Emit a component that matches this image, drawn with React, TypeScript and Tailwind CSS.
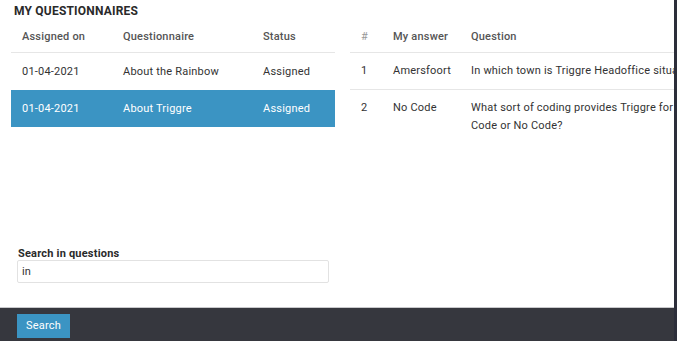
import React from 'react';

const questionnaires = [
  { date: '01-04-2021', name: 'About the Rainbow', status: 'Assigned' },
  { date: '01-04-2021', name: 'About Triggre', status: 'Assigned', selected: true },
];

const answers = [
  { nr: '1', answer: 'Amersfoort', question: 'In which town is Triggre Headoffice situated?' },
  { nr: '2', answer: 'No Code', question: 'What sort of coding provides Triggre for Low Code or No Code?' },
];

export default function App() {
  return (
    <div className="w-[677px] h-[341px] flex bg-[#2c2e3a] overflow-hidden text-[11px] text-[#333] tracking-[0.2px]" style={{ fontFamily: 'Roboto, "Noto Sans", sans-serif' }}>
      <div className="w-[674px] flex flex-col">
        <div className="h-[307px] bg-white overflow-hidden flex flex-col">
          <h1 className="pl-[14px] pt-[3px] h-[22px] text-[12px] font-bold leading-[16px] text-[#2a2a2a] tracking-[0.2px]">MY QUESTIONNAIRES</h1>

          <div className="flex h-[226px]">
            {/* questionnaires */}
            <div className="ml-[11px] w-[324px] shrink-0">
              <div className="grid grid-cols-[101px_140px_1fr] h-[31px] items-center border-b border-[#e6e6e6] font-medium text-[#555]">
                <span className="pl-[11px]">Assigned on</span>
                <span className="pl-[11px]">Questionnaire</span>
                <span className="pl-[11px]">Status</span>
              </div>
              {questionnaires.map((q, i) => (
                <div
                  key={i}
                  className={
                    q.selected
                      ? 'grid grid-cols-[101px_140px_1fr] h-[37px] pt-[1px] items-center bg-[#3b94c3] text-white'
                      : 'grid grid-cols-[101px_140px_1fr] h-[37px] pt-[1px] items-center'
                  }
                >
                  <span className="pl-[11px]">{q.date}</span>
                  <span className="pl-[11px]">{q.name}</span>
                  <span className="pl-[11px]">{q.status}</span>
                </div>
              ))}
            </div>

            {/* answers */}
            <div className="ml-[15px] w-[420px] shrink-0">
              <div className="grid grid-cols-[32px_78px_250px] h-[31px] items-center border-b border-[#e6e6e6] font-medium text-[#555]">
                <span className="pl-[11px] text-[#999] font-normal">#</span>
                <span className="pl-[11px]">My answer</span>
                <span className="pl-[11px]">Question</span>
              </div>
              {answers.map((a, i) => (
                <div
                  key={i}
                  className={
                    i === 0
                      ? 'grid grid-cols-[32px_78px_250px] h-[37px] pt-[1px] items-center border-b border-[#e6e6e6]'
                      : 'grid grid-cols-[32px_78px_250px] items-start pt-[9px] leading-[18px]'
                  }
                >
                  <span className="pl-[11px]">{a.nr}</span>
                  <span className="pl-[11px]">{a.answer}</span>
                  <span className="pl-[11px]">{a.question}</span>
                </div>
              ))}
            </div>
          </div>

          <div className="pl-[17px]">
            <label className="block pl-[1px] font-bold text-[11px] leading-[12px] text-[#2a2a2a] tracking-[0.2px]">Search in questions</label>
            <input
              defaultValue="in"
              className="w-[312px] h-[23px] border border-[#e2e2e2] rounded-[2px] px-[4px] text-[11px] text-[#333] outline-none tracking-[0.2px]"
              style={{ fontFamily: 'Roboto, "Noto Sans", sans-serif' }}
            />
          </div>
        </div>

        <div className="h-[34px] bg-[#36373e] border-t border-[#c9c9cc] pl-[17px] pt-[6px]">
          <button className="w-[53px] h-[24px] bg-[#3b94c3] text-white text-[11px] pt-[1px]">Search</button>
        </div>
      </div>
    </div>
  );
}
